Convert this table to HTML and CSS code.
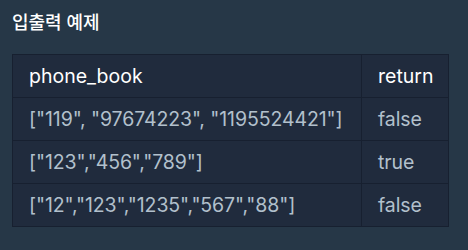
FILE: index.html
```html
<!DOCTYPE html>
<html lang="ko">
<head>
    <meta charset="UTF-8">
    <meta name="viewport" content="width=device-width, initial-scale=1.0">
    <title>입출력 예제</title>
    <link rel="stylesheet" href="styles.css">
</head>
<body>
    <div class="section">
        <h5 class="section-title">입출력 예제</h5>
        <table class="io-table">
            <thead>
                <tr>
                    <th>phone_book</th>
                    <th>return</th>
                </tr>
            </thead>
            <tbody>
                <tr>
                    <td>["119", "97674223", "1195524421"]</td>
                    <td>false</td>
                </tr>
                <tr>
                    <td>["123","456","789"]</td>
                    <td>true</td>
                </tr>
                <tr>
                    <td>["12","123","1235","567","88"]</td>
                    <td>false</td>
                </tr>
            </tbody>
        </table>
    </div>
</body>
</html>
```

FILE: styles.css
```css
body {
    font-family: Inter, "Noto Sans CJK KR", sans-serif;
    background-color: #263747;
    color: #fff;
    margin: 0;
    padding: 0;
}
.section {
    padding: 12px 12px;
}
.section-title {
    margin: 0 0 20px 0;
    font-size: 18px;
    font-weight: 500;
    line-height: 22px;
    color: #fff;
}
.io-table {
    border-collapse: collapse;
    table-layout: fixed;
    width: 436px;
    background-color: #202b3d;
    font-size: 19.5px;
}
.io-table th,
.io-table td {
    border: 1px solid #172030;
    height: 43px;
    padding: 0 16px;
    text-align: left;
    white-space: nowrap;
    box-sizing: border-box;
}
.io-table th {
    color: #fff;
    font-weight: 400;
}
.io-table td {
    color: #b2c0cc;
    letter-spacing: -0.1px;
}
.io-table th:first-child {
    width: 349px;
}
.io-table th:last-child {
    width: 87px;
}
```
